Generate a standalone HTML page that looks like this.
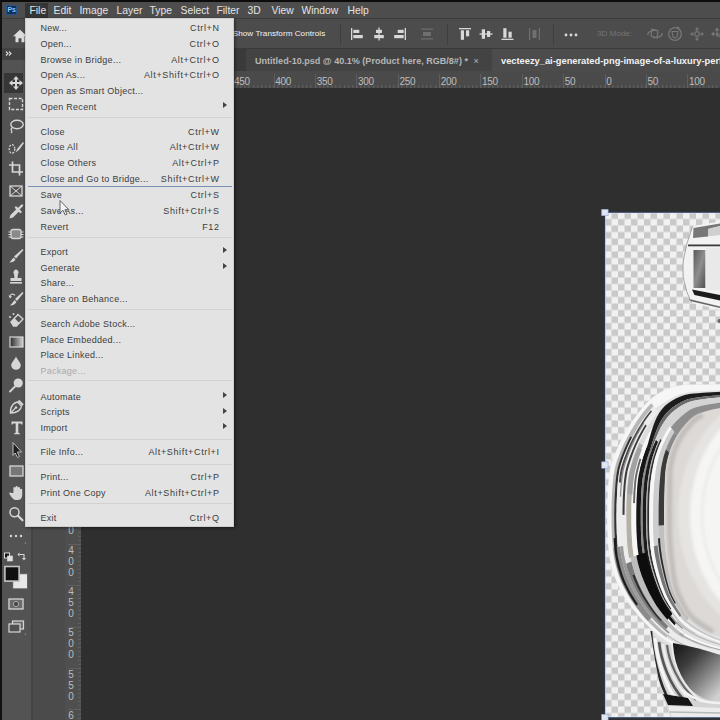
<!DOCTYPE html>
<html><head><meta charset="utf-8"><title>Photoshop</title>
<style>
*{box-sizing:border-box;margin:0;padding:0}
html,body{width:720px;height:720px;overflow:hidden;background:#2a2a2a;font-family:"Liberation Sans",sans-serif}
#app{position:relative;width:720px;height:720px;overflow:hidden;background:#2f2f2f}
.abs{position:absolute}
#topstrip{left:0;top:0;width:720px;height:2.5px;background:#0c0c0c}
#leftstrip{left:0;top:0;width:2px;height:720px;background:#111}
#menubar{left:2px;top:2px;width:718px;height:16px;background:#4d4d4d}
.mb{position:absolute;top:0;margin-left:-.5px;font-size:10.35px;line-height:14px;color:#e4e4e4;white-space:nowrap}
#filehl{left:25px;top:3px;width:23px;height:15px;background:#353535}
#pslogo{left:6px;top:5px;width:11px;height:10px;background:#12305a;border:1px solid #24558f;color:#8fc4f5;font-size:7px;line-height:8px;font-weight:bold;text-align:center;letter-spacing:-.3px}
#optbar{left:2px;top:18px;width:718px;height:30px;background:#4c4c4c;border-top:1px solid #3c3c3c}
#tabbar{left:2px;top:48px;width:718px;height:23px;background:#3a3a3a}
#intab{left:246px;top:49px;width:246px;height:22px;background:#434343}
#acttab{left:492px;top:49px;width:228px;height:22px;background:#4c4c4c}
.tab{position:absolute;top:54px;font-size:9.5px;line-height:14px;white-space:nowrap}
#hruler{left:65px;top:71px;width:655px;height:17px;background:#4a4a4a}
#hticks{left:81px;top:85px;width:639px;height:3px;background:repeating-linear-gradient(90deg,#626262 0,#626262 1px,transparent 1px,transparent 4.136px);background-position:2.3px 0}
#vticks{left:78px;top:88px;width:3px;height:632px;background:repeating-linear-gradient(180deg,#626262 0,#626262 1px,transparent 1px,transparent 4.136px);background-position:0 0.9px}
.hl{position:absolute;top:4.5px;margin-left:-.8px;font-size:10px;letter-spacing:-.3px;line-height:12px;color:#bdbdbd}
.ht{position:absolute;top:3px;width:1px;height:14px;background:#5e5e5e}
#vruler{left:65px;top:88px;width:16px;height:632px;background:#4f4f4f}
.vl{position:absolute;left:2px;font-size:10px;line-height:11px;color:#bdbdbd;text-align:center;width:8px}
.vt{position:absolute;left:3px;width:13px;height:1px;background:#5e5e5e}
#toolbar{left:2px;top:50px;width:29px;height:670px;background:#535353}
#tbsep{left:31px;top:50px;width:2px;height:670px;background:#444}
#panel{left:33px;top:71px;width:32px;height:649px;background:#4b4b4b}
#menu{left:25px;top:18px;width:209px;height:509px;background:#e3e3e3;box-shadow:inset 0 0 0 1px #cdcdcd,1px 1px 3px rgba(0,0,0,.5)}
.mi{position:absolute;left:0;width:209px;height:16px;font-size:9px;line-height:16px;color:#3c3c3c;white-space:nowrap}
.mi .l{position:absolute;left:15.4px;letter-spacing:.28px}
.mi .s{position:absolute;right:15px;letter-spacing:.65px;margin-right:-.65px}
.mi .ar{position:absolute;right:6.8px;top:3.5px;width:0;height:0;border-left:4px solid #444;border-top:3px solid transparent;border-bottom:3px solid transparent}
.mi.dis{color:#a9a9a9}
.sep{position:absolute;left:3px;width:204px;height:1px;background:#d2d2d2}
.bsep{position:absolute;left:3px;width:204px;height:1px;background:#7a90b9}
</style></head><body>
<div id="app">
<div class="abs" id="topstrip"></div>
<div class="abs" id="menubar"></div>
<div class="abs" id="filehl"></div>
<div class="abs" style="left:0;top:4px;width:720px;height:15px"><span class="mb" style="left:30px">File</span>
<span class="mb" style="left:54px">Edit</span>
<span class="mb" style="left:80px">Image</span>
<span class="mb" style="left:117px">Layer</span>
<span class="mb" style="left:150px">Type</span>
<span class="mb" style="left:181px">Select</span>
<span class="mb" style="left:217px">Filter</span>
<span class="mb" style="left:248px">3D</span>
<span class="mb" style="left:272px">View</span>
<span class="mb" style="left:302px">Window</span>
<span class="mb" style="left:348px">Help</span></div>
<div class="abs" id="pslogo">Ps</div>
<div class="abs" id="optbar"></div>
<div class="abs" id="tabbar"></div>
<div class="abs" id="intab"></div>
<div class="abs" id="acttab"></div>
<span class="tab" style="left:255px;color:#b6b6b6;font-weight:bold;font-size:9.05px">Untitled-10.psd @ 40.1% (Product here, RGB/8#) * <span style="font-weight:normal;margin-left:3px">×</span></span>
<span class="tab" style="left:501px;color:#f2f2f2;font-weight:bold;font-size:9.3px">vecteezy_ai-generated-png-image-of-a-luxury-perfume</span>
<div class="abs" id="hruler"><span class="hl" style="left:169.8px">450</span>
<i class="ht" style="left:167.3px"></i>
<span class="hl" style="left:211.1px">400</span>
<i class="ht" style="left:208.6px"></i>
<span class="hl" style="left:252.5px">350</span>
<i class="ht" style="left:250.0px"></i>
<span class="hl" style="left:293.8px">300</span>
<i class="ht" style="left:291.3px"></i>
<span class="hl" style="left:335.2px">250</span>
<i class="ht" style="left:332.7px"></i>
<span class="hl" style="left:376.6px">200</span>
<i class="ht" style="left:374.1px"></i>
<span class="hl" style="left:417.9px">150</span>
<i class="ht" style="left:415.4px"></i>
<span class="hl" style="left:459.3px">100</span>
<i class="ht" style="left:456.8px"></i>
<span class="hl" style="left:500.6px">50</span>
<i class="ht" style="left:498.1px"></i>
<span class="hl" style="left:542.0px">0</span>
<i class="ht" style="left:539.5px"></i>
<span class="hl" style="left:583.4px">50</span>
<i class="ht" style="left:580.9px"></i>
<span class="hl" style="left:624.7px">100</span>
<i class="ht" style="left:622.2px"></i></div>
<div class="abs" id="vruler"><span class="vl" style="top:415.3px">3<br>5<br>0</span>
<i class="vt" style="top:414.5px"></i>
<span class="vl" style="top:456.7px">4<br>0<br>0</span>
<i class="vt" style="top:455.9px"></i>
<span class="vl" style="top:498.0px">4<br>5<br>0</span>
<i class="vt" style="top:497.2px"></i>
<span class="vl" style="top:539.4px">5<br>0<br>0</span>
<i class="vt" style="top:538.6px"></i>
<span class="vl" style="top:580.8px">5<br>5<br>0</span>
<i class="vt" style="top:580.0px"></i>
<span class="vl" style="top:622.1px">6<br>0<br>0</span>
<i class="vt" style="top:621.3px"></i></div>
<div class="abs" id="hticks"></div><div class="abs" id="vticks"></div>
<div class="abs" id="toolbar"></div>
<div class="abs" id="tbsep"></div>
<div class="abs" style="left:2px;top:48px;width:29px;height:12px;background:#414141"></div>
<div class="abs" id="panel"></div>
<svg class="abs" style="left:0;top:0" width="720" height="72" viewBox="0 0 720 72"><g transform="translate(20 36.3)" ><path d="M0-6.5 L7 0 H4.5 V6 H1.5 V2 H-1.5 V6 H-4.5 V0 H-7 Z" fill="#dcdcdc"/></g>
<path d="M6 51.5 L8 53.5 L6 55.5 M9 51.5 L11 53.5 L9 55.5" fill="none" stroke="#ddd" stroke-width="1.1"/>
<rect x="340" y="24" width="1" height="21" fill="#3e3e3e"/>
<rect x="447" y="24" width="1" height="21" fill="#3e3e3e"/>
<rect x="553" y="24" width="1" height="21" fill="#3e3e3e"/>
<g transform="translate(357 34)" ><rect x="-6" y="-6" width="1.3" height="12" fill="#d8d8d8"/><rect x="-3.7" y="-4.2" width="6" height="3.2" fill="#d8d8d8"/><rect x="-3.7" y="1" width="9.5" height="3.2" fill="#d8d8d8"/></g>
<g transform="translate(379 34)" ><rect x="-0.6" y="-6.5" width="1.3" height="13" fill="#d8d8d8"/><rect x="-3" y="-4.2" width="6" height="3.2" fill="#d8d8d8"/><rect x="-4.7" y="1" width="9.5" height="3.2" fill="#d8d8d8"/></g>
<g transform="translate(400 34)" ><rect x="4.7" y="-6" width="1.3" height="12" fill="#d8d8d8"/><rect x="-2.3" y="-4.2" width="6" height="3.2" fill="#d8d8d8"/><rect x="-5.8" y="1" width="9.5" height="3.2" fill="#d8d8d8"/></g>
<g transform="translate(427 34)" ><rect x="-6" y="-5.5" width="12" height="1.2" fill="#6f6f6f"/><rect x="-6" y="4.3" width="12" height="1.2" fill="#6f6f6f"/><rect x="-4" y="-2" width="8" height="4" fill="#6f6f6f"/></g>
<g transform="translate(465 34)" ><rect x="-6" y="-6" width="12" height="1.3" fill="#d8d8d8"/><rect x="-4.2" y="-3.7" width="3.2" height="9.5" fill="#d8d8d8"/><rect x="1" y="-3.7" width="3.2" height="6" fill="#d8d8d8"/></g>
<g transform="translate(486 34)" ><rect x="-6.5" y="-0.6" width="13" height="1.3" fill="#d8d8d8"/><rect x="-4.2" y="-4.7" width="3.2" height="9.5" fill="#d8d8d8"/><rect x="1" y="-3" width="3.2" height="6" fill="#d8d8d8"/></g>
<g transform="translate(507.5 34)" ><rect x="-6" y="4.7" width="12" height="1.3" fill="#d8d8d8"/><rect x="-4.2" y="-5.8" width="3.2" height="9.5" fill="#d8d8d8"/><rect x="1" y="-2.3" width="3.2" height="6" fill="#d8d8d8"/></g>
<g transform="translate(534.5 34)" ><rect x="-5.5" y="-6" width="1.2" height="12" fill="#6f6f6f"/><rect x="4.3" y="-6" width="1.2" height="12" fill="#6f6f6f"/><rect x="-2" y="-4" width="4" height="8" fill="#6f6f6f"/></g>
<g transform="translate(571 35)" ><circle cx="-5" cy="0" r="1.4" fill="#d8d8d8"/><circle cx="0" cy="0" r="1.4" fill="#d8d8d8"/><circle cx="5" cy="0" r="1.4" fill="#d8d8d8"/></g>
<g transform="translate(655 34)" ><path d="M-7 1 A7 4 0 0 1 2-3.5 M7-1 A7 4 0 0 1 -2 3.5" fill="none" stroke="#777" stroke-width="1.3"/><path d="M-3-5 L3-3 L2 4 L-4 2 Z" fill="none" stroke="#777" stroke-width="1.2"/></g>
<g transform="translate(675 34)" ><circle r="6.3" fill="none" stroke="#777" stroke-width="1.3"/><path d="M-3-2.5 H3 L2 3 L0 4 L-2 3 Z" fill="none" stroke="#777" stroke-width="1.1"/><path d="M2-8 L5-6 L2.5-4.5Z" fill="#777"/></g>
<g transform="translate(697 34)" ><path d="M0-7 L2.2-4.5 H-2.2 Z M0 7 L2.2 4.5 H-2.2 Z M-7 0 L-4.5-2.2 V2.2 Z M7 0 L4.5-2.2 V2.2 Z" fill="#777"/><path d="M0-5 V5 M-5 0 H5" stroke="#777" stroke-width="1.2"/><rect x="-2" y="-2" width="4" height="4" fill="#4c4c4c" stroke="#777" stroke-width="1"/></g>
<g transform="translate(717 34)" ><path d="M-6 0 L-3-2.5 V2.5 Z M0-6.5 L2.5-3.5 H-2.5 Z" fill="#777"/><path d="M-4 0 H3 M0-4 V3 M0 0 L4 4" stroke="#777" stroke-width="1.2"/></g></svg><span class="abs" style="left:232.8px;top:27px;font-size:8.1px;line-height:14px;color:#f4f4f4;white-space:nowrap;letter-spacing:.05px">Show Transform Controls</span><span class="abs" style="left:597px;top:27px;font-size:8.1px;line-height:14px;color:#757575;white-space:nowrap">3D Mode:</span>
<svg class="abs" style="left:0;top:0" width="34" height="720" viewBox="0 0 34 720"><rect x="4" y="73" width="19" height="20" fill="#363636"/>
<g transform="translate(16 83)" ><path d="M0-7 L3-3.5 H1 V-1 H3.5 V-3 L7 0 L3.5 3 V1 H1 V3.5 H3 L0 7 L-3 3.5 H-1 V1 H-3.5 V3 L-7 0 L-3.5-3 V-1 H-1 V-3.5 H-3 Z" fill="#d6d6d6"/></g>
<g transform="translate(16 104)" ><rect x="-6.5" y="-5.5" width="13" height="11" fill="none" stroke="#d6d6d6" stroke-width="1.4" stroke-dasharray="3 1.6"/></g>
<g transform="translate(16 126)" ><ellipse cx="1" cy="-1.5" rx="6.2" ry="4.2" fill="none" stroke="#d6d6d6" stroke-width="1.4"/><path d="M-3.5 1.5 q-2 1.5 -1 3 q1 1.5 -0.5 2.5" fill="none" stroke="#d6d6d6" stroke-width="1.3"/></g>
<g transform="translate(16 148)" ><ellipse cx="-4" cy="1" rx="2.8" ry="4.3" fill="none" stroke="#d6d6d6" stroke-width="1.2" stroke-dasharray="2 1.3"/><path d="M7-6 L1.5 0.5 L-0.5 4.5 L3 2 L8-5 Z" fill="#d6d6d6"/></g>
<g transform="translate(16 168.5)" ><path d="M-3.5-7 V3.5 H7 M-7-3.5 H3.5 V7" fill="none" stroke="#d6d6d6" stroke-width="1.7"/></g>
<g transform="translate(16 191)" ><rect x="-6" y="-5" width="12" height="10" fill="none" stroke="#d6d6d6" stroke-width="1.3"/><path d="M-6-5 L6 5 M6-5 L-6 5" stroke="#d6d6d6" stroke-width="1"/></g>
<g transform="translate(16 212)" ><path d="M-6.5 6.5 L-5.5 3 L1-3.5 L3.5-1 L-3 5.5 Z" fill="#d6d6d6"/><path d="M0-4.5 L4.5 0 M2.5-3 L6-6.5" stroke="#d6d6d6" stroke-width="2.4" stroke-linecap="round"/></g>
<g transform="translate(16 234)" ><rect x="-5" y="-4.5" width="10" height="9" rx="2" fill="#8a8a8a" stroke="#d6d6d6" stroke-width="1.3"/><path d="M-7.5-2 H-5 M-7.5 0.5 H-5 M-7.5 3 H-5 M5-2 H7.5 M5 0.5 H7.5 M5 3 H7.5" stroke="#d6d6d6" stroke-width="1"/></g>
<g transform="translate(16 256)" ><path d="M6.5-7 L7.5-6 L0 2.5 L-2 0.5 Z" fill="#d6d6d6"/><path d="M-2.5 1.5 L-0.5 3.5 Q-2 6.5 -6.5 6.5 Q-4.5 4 -2.5 1.5 Z" fill="#d6d6d6"/></g>
<g transform="translate(16 277)" ><path d="M-2-3 A2.6 2.6 0 1 1 2-3 L1.5 1 H5.5 V4 H-5.5 V1 H-1.5 Z" fill="#d6d6d6"/><rect x="-6" y="5" width="12" height="1.6" fill="#d6d6d6"/></g>
<g transform="translate(16 299)" ><path d="M6.5-7 L7.5-6 L1 2 L-1 0 Z" fill="#d6d6d6"/><path d="M-1.5 1 L0.5 3 Q-1.5 6.5 -6 6.5 Q-3.5 4 -1.5 1 Z" fill="#d6d6d6"/><path d="M-6.5-2 A3 3 0 0 1 -1-3.5" fill="none" stroke="#d6d6d6" stroke-width="1.2"/><path d="M-7.5-3.5 L-6-0.5 L-4-2.5 Z" fill="#d6d6d6"/></g>
<g transform="translate(16 320)" ><path d="M-5 2 L2-5.5 L7-1 L0.5 6 H-2.5 Z" fill="none" stroke="#d6d6d6" stroke-width="1.3"/><path d="M-1.5-1.8 L3.5 3 L0.5 6 H-2.5 L-5 2 Z" fill="#d6d6d6"/><circle cx="-6" cy="-3" r="1" fill="#d6d6d6"/><circle cx="-2.5" cy="-6" r="1" fill="#d6d6d6"/></g>
<defs><linearGradient id="gr1" x1="0" x2="1" y1="0" y2="0"><stop offset="0" stop-color="#2a2a2a"/><stop offset="1" stop-color="#d0d0d0"/></linearGradient></defs>
<g transform="translate(16 342)" ><rect x="-6" y="-5" width="13" height="10" fill="url(#gr1)" stroke="#d6d6d6" stroke-width="1.2"/></g>
<g transform="translate(16 363)" ><path d="M0-6.5 C1.5-3 4.8-0.5 4.8 2.3 A4.8 4.4 0 0 1 -4.8 2.3 C-4.8-0.5 -1.5-3 0-6.5 Z" fill="#d6d6d6"/></g>
<g transform="translate(16 385)" ><circle cx="2.2" cy="-2" r="4.6" fill="#d6d6d6"/><path d="M-1 1.5 L-6 6.5" stroke="#d6d6d6" stroke-width="1.8" stroke-linecap="round"/></g>
<g transform="translate(16 407)" ><path d="M-5.5 6 C-6-1 -2-4.5 1.5-5 L5.5-1 C5 2.5 1.5 6 -5.5 6 Z" fill="none" stroke="#d6d6d6" stroke-width="1.4"/><path d="M-5.5 6 L-0.5 1" stroke="#d6d6d6" stroke-width="1.1"/><circle cx="0" cy="0.5" r="1.2" fill="#d6d6d6"/><path d="M2.5-6.5 L7-2" stroke="#d6d6d6" stroke-width="2"/></g>
<g transform="translate(17 428)" ><path d="M-5.5-6.5 H5.5 V-3.5 H4.3 L4-4.6 H1.3 V4.8 L2.8 5.2 V6.3 H-2.8 V5.2 L-1.3 4.8 V-4.6 H-4 L-4.3-3.5 H-5.5 Z" fill="#d6d6d6"/></g>
<g transform="translate(16 450)" ><path d="M-3-7.5 L5.5 2 L1.3 2 L3.5 6.5 L1.5 7.5 L-0.8 3 L-3 5.5 Z" fill="#1f1f1f" stroke="#bdbdbd" stroke-width="1"/></g>
<g transform="translate(16 471)" ><rect x="-6" y="-5" width="13" height="10" fill="#777" stroke="#d6d6d6" stroke-width="1.3"/></g>
<g transform="translate(16 493)" ><path d="M-2.6 0 V-5 a1.1 1.1 0 0 1 2.2 0 V-6 a1.1 1.1 0 0 1 2.2 0 V-5 a1.1 1.1 0 0 1 2.2 0 V-3.2 a1.1 1.1 0 0 1 2.2 0 V2 C6.2 5 4.5 7 1.5 7 H0 C-2.5 7 -4 5 -6.5 1 C-7.2-0.3 -5.6-1 -4.6 0 Z" fill="#d6d6d6"/></g>
<g transform="translate(16 514)" ><circle cx="-1.5" cy="-1.8" r="4.5" fill="none" stroke="#d6d6d6" stroke-width="1.5"/><path d="M2 1.8 L6.5 6.3" stroke="#d6d6d6" stroke-width="2.2" stroke-linecap="round"/></g>
<g transform="translate(16 536)" ><circle cx="-5" cy="0" r="1.2" fill="#d6d6d6"/><circle cx="0" cy="0" r="1.2" fill="#d6d6d6"/><circle cx="5" cy="0" r="1.2" fill="#d6d6d6"/><path d="M8.5 7.5 L10 6 V7.5 Z" fill="#aaa"/></g>
<rect x="4.5" y="553" width="5" height="5" fill="#111" stroke="#ddd" stroke-width="1"/><rect x="7.5" y="556" width="5" height="5" fill="#e0e0e0" stroke="#ddd" stroke-width="0.6"/>
<path d="M19.5 554.5 H24 V559" fill="none" stroke="#d6d6d6" stroke-width="1.1"/><path d="M19.5 552.5 L17.5 554.5 L19.5 556.5 Z M22 558 L24 560.5 L26 558 Z" fill="#d6d6d6"/>
<rect x="12.8" y="573.8" width="14.6" height="15" fill="#e8e8e8" stroke="#5a5a5a" stroke-width="0.8"/>
<rect x="4.9" y="566.5" width="14.2" height="14.6" fill="#101010" stroke="#c4c4c4" stroke-width="1.6"/>
<g transform="translate(16 604)" ><rect x="-7" y="-5" width="14" height="10" fill="#6a6a6a" stroke="#d6d6d6" stroke-width="1.3"/><circle cx="0" cy="0" r="2.7" fill="#4a4a4a" stroke="#d6d6d6" stroke-width="0.6"/></g>
<g transform="translate(16 627)" ><rect x="-3.5" y="-6" width="11" height="8" fill="#6a6a6a" stroke="#d6d6d6" stroke-width="1.2"/><rect x="-7" y="-3" width="11" height="8" fill="#505050" stroke="#d6d6d6" stroke-width="1.2"/><path d="M8.5 7.5 L10 6 V7.5 Z" fill="#aaa"/></g></svg>
<svg class="abs" style="left:596px;top:206px" width="124" height="514" viewBox="596 206 124 514"><defs>
<pattern id="chk" x="605" y="212.5" width="13" height="13" patternUnits="userSpaceOnUse">
<rect width="13" height="13" fill="#f1f1f1"/><rect x="6.5" width="6.5" height="6.5" fill="#c9c9c9"/><rect y="6.5" width="6.5" height="6.5" fill="#c9c9c9"/>
</pattern>
<filter id="bl1" x="-20%" y="-20%" width="140%" height="140%"><feGaussianBlur stdDeviation="0.7"/></filter>
<filter id="bl3" x="-10%" y="-10%" width="120%" height="120%"><feGaussianBlur stdDeviation="0.65"/></filter>
<filter id="bl2" x="-20%" y="-20%" width="140%" height="140%"><feGaussianBlur stdDeviation="1.6"/></filter>
<filter id="bl4" x="-30%" y="-30%" width="160%" height="160%"><feGaussianBlur stdDeviation="4"/></filter>
<linearGradient id="capin" x1="0" y1="0" x2="1" y2="1"><stop offset="0" stop-color="#5a5a5a"/><stop offset=".5" stop-color="#8e8e8e"/><stop offset="1" stop-color="#4e4e4e"/></linearGradient>
<linearGradient id="bowl" x1="0" y1="0" x2="0.8" y2="1"><stop offset="0" stop-color="#151515"/><stop offset=".35" stop-color="#3c3c3c"/><stop offset=".7" stop-color="#8a8a8a"/><stop offset="1" stop-color="#d0d0d0"/></linearGradient>
<radialGradient id="lab" cx="760" cy="520" r="110" gradientUnits="userSpaceOnUse"><stop offset="0" stop-color="#f4f4f2"/><stop offset=".7" stop-color="#ececea"/><stop offset="1" stop-color="#dcdad8"/></radialGradient>
<clipPath id="imgclip"><rect x="605" y="212.5" width="115" height="505"/></clipPath>
<clipPath id="bodyclip"><path d="M720 384.3 L690 384.5 C672 384.5 655 392 642 408 C628 425 616 448 611 465 C606 485 606 540 610 560 C614 580 622 595 632 608 C640 618 646 624 650 628 L655 660 L661 692 L671 718 L720 718 Z"/></clipPath>
</defs>
<rect x="605" y="212.5" width="115" height="505" fill="url(#chk)"/>
<g clip-path="url(#imgclip)">
<g filter="url(#bl1)">
<path d="M720 221.5 L693 226 L687 245 L683.5 262 V276 L687 291 L692 303 L720 310 Z" fill="#f2f2f2"/>
<path d="M693.5 228 L720 223.5 V226 L708 229 V236.5 L693 238 Z" fill="#777"/>
<path d="M708 229 L720 226 V235 L708 236.5 Z" fill="#cfcfcf"/>
<path d="M688 244.5 H720 V246.3 H688 Z" fill="#3a3a3a"/>
<rect x="693.5" y="250" width="12" height="38" fill="url(#capin)"/>
<rect x="705.5" y="248" width="15" height="42" fill="#e9e9e9"/>
<path d="M692 289.5 L720 295 V300.5 L694.5 295 Z" fill="#1e1e1e"/>
<path d="M689 299 L720 306.5 V308 L690 301 Z" fill="#666"/>
<path d="M692.5 226.5 L686.5 245 L683 262 V276 L686.5 291 L691.5 303" fill="none" stroke="#9a9a9a" stroke-width="0.8"/>
</g>
<circle cx="719.5" cy="321" r="2" fill="#666" filter="url(#bl1)"/>
<g clip-path="url(#bodyclip)">
<rect x="600" y="375" width="125" height="345" fill="#e2e2e2"/>
<g filter="url(#bl3)">
<path d="M730.0 384.3 L725.0 384.3 L720.0 384.3 L715.0 384.3 L710.0 384.4 L705.0 384.4 L700.0 384.4 L695.0 384.5 L690.0 384.5 L685.0 384.7 L680.0 385.3 L675.1 386.3 L670.4 387.7 L665.7 389.5 L661.2 391.7 L656.9 394.3 L652.9 397.3 L649.1 400.5 L645.5 404.0 L642.2 407.7 L639.1 411.7 L636.1 415.7 L633.2 419.8 L630.5 423.9 L627.9 428.2 L625.3 432.5 L622.9 436.9 L620.6 441.3 L618.4 445.8 L616.4 450.4 L614.5 455.0 L612.7 459.7 L611.2 464.4 L610.1 469.3 L609.3 474.3 L608.7 479.2 L608.3 484.2 L607.9 489.2 L607.6 494.2 L607.4 499.2 L607.3 504.2 L607.2 509.2 L607.1 514.2 L607.1 519.2 L607.2 524.2 L607.3 529.2 L607.5 534.2 L607.7 539.2 L608.1 544.2 L608.5 549.1 L609.1 554.1 L609.8 559.0 L610.9 563.9 L612.1 568.8 L613.5 573.6 L615.2 578.3 L617.1 582.9 L619.2 587.5 L621.4 591.9 L623.9 596.2 L626.6 600.5 L629.5 604.6 L632.5 608.6 L635.6 612.5 L638.8 616.3 L642.2 620.0 L645.6 623.6 L649.2 627.1 L652.9 630.5 L656.7 633.7 L660.7 636.8 L664.7 639.7 L668.9 642.5 L673.3 644.9 L677.8 647.0 L682.4 649.0 L687.0 650.7 L691.8 652.3 L696.6 653.7 L701.5 654.8 L706.4 655.9 L711.3 656.8 L716.2 657.5 L721.2 658.1 L726.2 658.7 L730.0 659.0 L730.2 657.6 L726.3 657.2 L721.4 656.6 L716.6 655.9 L711.7 655.1 L706.8 654.1 L702.0 653.0 L697.3 651.8 L692.6 650.4 L687.9 648.8 L683.3 647.0 L678.9 645.0 L674.5 642.8 L670.2 640.3 L666.2 637.5 L662.3 634.5 L658.5 631.4 L654.8 628.1 L651.3 624.8 L647.9 621.3 L644.6 617.7 L641.4 613.9 L638.4 610.1 L635.4 606.3 L632.6 602.3 L629.9 598.2 L627.4 594.1 L625.1 589.8 L622.9 585.5 L620.9 581.0 L619.2 576.5 L617.6 571.9 L616.3 567.2 L615.1 562.5 L614.1 557.8 L613.4 553.0 L612.9 548.2 L612.5 543.4 L612.2 538.5 L611.9 533.7 L611.8 528.9 L611.6 524.0 L611.6 519.2 L611.6 514.4 L611.6 509.5 L611.7 504.7 L611.8 499.8 L612.0 495.0 L612.3 490.2 L612.7 485.3 L613.1 480.5 L613.6 475.7 L614.4 470.9 L615.4 466.2 L616.8 461.5 L618.4 457.0 L620.2 452.4 L622.1 448.0 L624.1 443.6 L626.3 439.2 L628.6 434.9 L631.3 430.9 L634.2 427.1 L637.5 423.5 L640.8 420.2 L644.3 417.0 L647.9 414.0 L651.6 411.1 L655.4 408.3 L659.2 405.7 L663.1 403.2 L667.1 400.7 L671.1 398.4 L675.2 396.3 L679.5 394.6 L683.9 393.2 L688.4 392.3 L693.0 391.8 L697.6 391.5 L702.3 391.2 L706.9 390.9 L711.6 390.7 L716.4 390.5 L721.1 390.3 L725.9 390.2 L730.6 390.1 Z" fill="#f6f6f6"/>
<path d="M651.3 403.2 L647.8 406.7 L644.7 410.4 L641.7 414.3 L638.8 418.3 L636.1 422.3 L633.5 426.4 L631.0 430.6 L628.6 434.9 L626.3 439.2 L624.1 443.6 L622.1 448.0 L620.2 452.4 L618.4 457.0 L616.8 461.5 L615.4 466.2 L614.4 470.9 L613.6 475.7 L613.1 480.5 L612.7 485.3 L612.3 490.2 L612.0 495.0 L611.8 499.8 L611.7 504.7 L611.6 509.5 L611.6 514.4 L611.6 519.2 L611.6 524.0 L611.8 528.9 L611.9 533.7 L612.2 538.5 L612.5 543.4 L612.9 548.2 L613.4 553.0 L614.1 557.8 L615.1 562.5 L616.3 567.2 L617.6 571.9 L619.2 576.5 L620.9 581.0 L622.9 585.5 L625.1 589.8 L627.4 594.1 L629.9 598.2 L632.6 602.3 L635.4 606.3 L638.4 610.1 L641.4 613.9 L644.6 617.7 L647.9 621.3 L651.3 624.8 L654.8 628.1 L658.5 631.4 L662.3 634.5 L666.2 637.5 L667.8 635.0 L664.1 632.0 L660.5 628.8 L657.0 625.5 L653.6 622.2 L650.4 618.7 L647.3 615.0 L644.3 611.3 L641.4 607.5 L638.7 603.7 L636.0 599.8 L633.6 595.7 L631.2 591.6 L629.1 587.5 L627.1 583.2 L625.2 578.9 L623.6 574.5 L622.1 570.1 L620.9 565.6 L619.8 561.0 L618.9 556.4 L618.2 551.8 L617.7 547.2 L617.4 542.5 L617.1 537.9 L616.8 533.2 L616.7 528.5 L616.6 523.9 L616.5 519.2 L616.5 514.6 L616.6 509.9 L616.6 505.3 L616.8 500.6 L617.0 495.9 L617.2 491.3 L617.5 486.6 L617.9 482.0 L618.4 477.3 L619.1 472.7 L620.0 468.1 L621.3 463.6 L622.8 459.2 L624.4 454.7 L626.2 450.4 L628.1 446.0 L630.1 441.7 L632.2 437.5 L634.4 433.3 L636.8 429.2 L639.2 425.1 L641.8 421.1 L644.5 417.2 L647.4 413.4 L650.4 409.7 L653.7 406.3 Z" fill="#b8b8b8"/>
<path d="M630.5 436.3 L628.3 440.6 L626.3 444.9 L624.3 449.3 L622.5 453.7 L620.8 458.1 L619.2 462.7 L617.9 467.2 L616.9 471.9 L616.2 476.6 L615.7 481.3 L615.3 486.0 L615.0 490.8 L614.7 495.5 L614.5 500.2 L614.4 505.0 L614.3 509.7 L614.2 514.5 L614.3 519.2 L614.3 524.0 L614.4 528.7 L614.6 533.4 L614.8 538.2 L615.1 542.9 L615.5 547.6 L616.0 552.4 L616.7 557.1 L617.6 561.7 L618.8 566.3 L620.1 570.9 L622.1 570.1 L620.8 565.6 L619.7 561.0 L618.8 556.4 L618.1 551.8 L617.6 547.2 L617.3 542.5 L617.0 537.9 L616.7 533.2 L616.6 528.6 L616.5 523.9 L616.4 519.2 L616.4 514.6 L616.5 509.9 L616.5 505.2 L616.7 500.6 L616.9 495.9 L617.1 491.3 L617.4 486.6 L617.8 481.9 L618.3 477.3 L619.0 472.7 L619.9 468.1 L621.2 463.6 L622.7 459.1 L624.3 454.7 L626.1 450.3 L628.0 446.0 L630.0 441.7 L632.1 437.5 Z" fill="#333"/>
<path d="M653.7 406.3 L650.4 409.7 L647.4 413.4 L644.5 417.2 L641.8 421.1 L639.2 425.1 L636.8 429.2 L634.4 433.3 L632.2 437.5 L630.1 441.7 L628.1 446.0 L626.2 450.4 L624.4 454.7 L622.8 459.2 L621.3 463.6 L620.0 468.1 L619.1 472.7 L618.4 477.3 L617.9 482.0 L617.5 486.6 L617.2 491.3 L617.0 495.9 L616.8 500.6 L616.6 505.3 L616.6 509.9 L616.5 514.6 L616.5 519.2 L616.6 523.9 L616.7 528.5 L616.8 533.2 L617.1 537.9 L617.4 542.5 L617.7 547.2 L618.2 551.8 L618.9 556.4 L619.8 561.0 L620.9 565.6 L622.1 570.1 L623.6 574.5 L625.2 578.9 L627.1 583.2 L629.1 587.5 L631.2 591.6 L633.6 595.7 L636.0 599.8 L638.7 603.7 L641.4 607.5 L644.3 611.3 L647.3 615.0 L650.4 618.7 L653.6 622.2 L657.0 625.5 L660.5 628.8 L664.1 632.0 L667.8 635.0 L671.7 637.9 L675.8 640.4 L680.1 642.7 L684.4 644.7 L688.9 646.6 L693.4 648.2 L698.0 649.7 L702.7 651.0 L707.4 652.2 L712.1 653.2 L716.9 654.2 L721.7 654.9 L726.6 655.6 L730.3 656.0 L730.7 652.9 L727.0 652.4 L722.3 651.6 L717.7 650.6 L713.1 649.5 L708.5 648.4 L704.0 647.0 L699.5 645.6 L695.1 644.0 L690.8 642.2 L686.6 640.2 L682.5 638.1 L678.5 635.7 L674.7 633.1 L671.1 630.1 L667.8 626.9 L664.5 623.7 L661.3 620.4 L658.3 617.0 L655.4 613.5 L652.6 609.8 L650.0 606.1 L647.6 602.3 L645.2 598.5 L643.0 594.7 L640.9 590.8 L638.9 586.8 L637.1 582.8 L635.4 578.8 L633.8 574.7 L632.4 570.5 L631.2 566.4 L630.1 562.2 L629.2 557.9 L628.4 553.7 L627.9 549.4 L627.4 545.1 L627.1 540.8 L626.9 536.5 L626.7 532.2 L626.6 527.9 L626.5 523.6 L626.4 519.3 L626.4 515.0 L626.4 510.7 L626.5 506.4 L626.6 502.1 L626.8 497.8 L627.0 493.5 L627.2 489.2 L627.6 484.9 L628.0 480.6 L628.6 476.3 L629.3 472.0 L630.4 467.7 L631.6 463.5 L632.9 459.3 L634.3 455.1 L635.9 451.0 L637.6 446.9 L639.4 442.8 L641.3 438.7 L643.4 434.7 L645.5 430.8 L647.8 426.9 L650.3 423.1 L652.9 419.4 L655.6 415.8 L658.6 412.3 Z" fill="#ececec"/>
<path d="M643.6 422.9 L641.1 426.8 L638.7 430.9 L636.5 434.9 L634.3 439.1 L632.3 443.3 L630.4 447.5 L628.6 451.8 L627.0 456.1 L625.4 460.5 L624.0 464.8 L622.8 469.3 L621.9 473.8 L621.3 478.3 L620.8 482.8 L620.4 487.4 L620.1 491.9 L619.9 496.5 L621.1 496.7 L621.3 492.2 L621.6 487.7 L622.0 483.2 L622.4 478.7 L623.1 474.2 L623.9 469.7 L625.1 465.3 L626.5 461.0 L628.0 456.7 L629.6 452.4 L631.3 448.1 L633.2 443.9 L635.2 439.7 L637.3 435.6 L639.5 431.5 L641.9 427.5 L644.3 423.6 Z" fill="#8a8a8a"/>
<path d="M639.4 442.8 L637.6 446.9 L635.9 451.0 L634.3 455.1 L632.9 459.3 L631.6 463.5 L630.4 467.7 L629.3 472.0 L628.6 476.3 L628.0 480.6 L627.6 484.9 L627.2 489.2 L627.0 493.5 L626.8 497.8 L626.6 502.1 L626.5 506.4 L626.4 510.7 L626.4 515.0 L626.4 519.3 L626.5 523.6 L626.6 527.9 L626.7 532.2 L626.9 536.5 L627.1 540.8 L627.4 545.1 L627.9 549.4 L628.4 553.7 L629.2 557.9 L633.9 556.4 L633.2 552.3 L632.7 548.2 L632.3 544.1 L632.0 539.9 L631.8 535.8 L631.6 531.7 L631.5 527.6 L631.4 523.4 L631.4 519.3 L631.4 515.2 L631.4 511.1 L631.4 507.0 L631.5 502.8 L631.7 498.7 L631.9 494.6 L632.1 490.4 L632.4 486.3 L632.8 482.2 L633.3 478.0 L633.9 473.9 L634.9 469.8 L635.9 465.7 L637.1 461.6 L638.4 457.5 L639.8 453.5 L641.3 449.4 L643.0 445.4 Z" fill="#b5b0a8"/>
<path d="M658.6 412.3 L655.6 415.8 L652.9 419.4 L650.3 423.1 L647.8 426.9 L645.5 430.8 L643.4 434.7 L641.3 438.7 L639.4 442.8 L643.0 445.4 L644.7 441.4 L646.6 437.5 L648.7 433.6 L650.8 429.8 L653.1 426.0 L655.6 422.3 L658.2 418.8 L661.0 415.4 Z" fill="#dcdcdc"/>
<path d="M661.0 415.4 L658.2 418.8 L655.6 422.3 L653.1 426.0 L650.8 429.8 L648.7 433.6 L646.6 437.5 L644.7 441.4 L643.0 445.4 L641.3 449.4 L639.8 453.5 L638.4 457.5 L637.1 461.6 L635.9 465.7 L634.9 469.8 L633.9 473.9 L633.3 478.0 L632.8 482.2 L632.4 486.3 L632.1 490.4 L631.9 494.6 L631.7 498.7 L631.5 502.8 L631.4 507.0 L631.4 511.1 L631.4 515.2 L631.4 519.3 L631.4 523.4 L631.5 527.6 L631.6 531.7 L631.8 535.8 L632.0 539.9 L632.3 544.1 L632.7 548.2 L633.2 552.3 L633.9 556.4 L634.8 560.5 L635.7 564.5 L636.9 568.6 L638.1 572.6 L639.5 576.5 L641.1 580.5 L642.7 584.4 L644.5 588.3 L646.4 592.1 L648.5 596.0 L650.6 599.8 L652.9 603.5 L655.3 607.2 L657.9 610.8 L660.6 614.4 L663.5 617.8 L666.5 621.1 L669.6 624.4 L672.8 627.6 L676.2 630.7 L679.9 633.4 L683.7 635.8 L687.7 638.0 L691.8 640.0 L696.0 641.8 L700.3 643.5 L704.6 645.0 L709.0 646.4 L713.5 647.7 L718.0 648.9 L722.6 649.9 L727.2 650.7 L730.8 651.4 L731.0 649.8 L727.4 649.1 L722.9 648.2 L718.4 647.1 L714.0 645.8 L709.6 644.5 L705.3 643.0 L701.0 641.5 L696.9 639.7 L692.8 637.8 L688.8 635.7 L684.9 633.5 L681.2 631.0 L677.7 628.3 L674.5 625.2 L671.4 621.9 L668.5 618.6 L665.6 615.2 L662.9 611.8 L660.4 608.2 L658.0 604.6 L655.8 600.9 L653.7 597.2 L651.7 593.4 L649.9 589.6 L648.2 585.8 L646.6 582.0 L645.1 578.2 L643.7 574.3 L642.4 570.4 L641.3 566.6 L640.3 562.7 L639.4 558.8 L638.6 554.8 L638.0 550.9 L637.5 547.0 L637.2 543.0 L636.9 539.1 L636.7 535.1 L636.5 531.2 L636.4 527.2 L636.3 523.3 L636.3 519.3 L636.3 515.4 L636.3 511.5 L636.4 507.5 L636.5 503.6 L636.6 499.6 L636.8 495.7 L637.0 491.7 L637.2 487.8 L637.6 483.8 L638.0 479.8 L638.6 475.8 L639.4 471.9 L640.3 467.9 L641.4 463.9 L642.5 459.9 L643.7 455.9 L645.1 452.0 L646.6 448.0 L648.2 444.1 L649.9 440.3 L651.8 436.4 L653.9 432.7 L656.0 429.0 L658.3 425.3 L660.8 421.8 L663.5 418.4 Z" fill="#f8f8f8"/>
<path d="M650.9 410.3 L647.9 414.0 L645.1 417.8 L642.4 421.7 L639.9 425.7 L637.4 429.7 L635.1 433.9 L632.9 438.0 L630.8 442.3 L628.8 446.5 L627.0 450.8 L625.3 455.2 L623.7 459.6 L622.2 464.0 L620.9 468.5 L620.0 473.1 L619.4 477.6 L618.9 482.3 L620.8 482.8 L621.3 478.3 L621.9 473.8 L622.8 469.3 L624.0 464.8 L625.4 460.5 L627.0 456.1 L628.6 451.8 L630.4 447.5 L632.3 443.3 L634.3 439.1 L636.5 434.9 L638.7 430.9 L641.1 426.8 L643.6 422.9 L646.3 419.0 L649.0 415.2 L652.0 411.5 Z" fill="#4a4a4a"/>
<path d="M645.4 424.6 L643.0 428.5 L640.7 432.5 L638.5 436.6 L636.5 440.7 L634.6 444.8 L632.8 449.0 L631.1 453.2 L629.5 457.5 L628.1 461.8 L626.7 466.1 L625.6 470.4 L624.8 474.8 L624.2 479.3 L623.7 483.7 L623.4 488.1 L623.1 492.6 L622.8 497.0 L622.7 501.5 L622.6 505.9 L622.5 510.4 L622.5 514.8 L624.5 514.9 L624.6 510.5 L624.6 506.2 L624.7 501.8 L624.9 497.4 L625.1 493.1 L625.4 488.7 L625.7 484.3 L626.2 479.9 L626.8 475.6 L627.5 471.2 L628.6 466.9 L629.9 462.7 L631.3 458.4 L632.8 454.2 L634.4 450.0 L636.1 445.9 L638.0 441.8 L640.0 437.7 L642.1 433.7 L644.3 429.7 L646.7 425.8 Z" fill="#3c3c3c"/>
<path d="M637.9 447.1 L636.3 451.2 L634.7 455.4 L633.3 459.5 L632.0 463.7 L630.8 467.9 L629.8 472.2 L629.0 476.4 L628.5 480.7 L628.1 485.0 L627.7 489.3 L627.5 493.6 L632.4 494.7 L632.6 490.6 L632.9 486.5 L633.3 482.3 L633.8 478.2 L634.4 474.1 L635.3 470.0 L636.4 465.9 L637.5 461.8 L638.8 457.8 L640.2 453.7 L641.7 449.7 Z" fill="#a2a2a2"/>
<path d="M639.6 458.2 L638.4 462.3 L637.3 466.4 L636.2 470.4 L635.3 474.5 L634.7 478.6 L634.2 482.7 L633.9 486.7 L633.6 490.8 L633.3 494.9 L633.2 499.0 L633.0 503.1 L635.0 503.3 L635.1 499.3 L635.3 495.3 L635.5 491.3 L635.8 487.3 L636.1 483.3 L636.6 479.3 L637.2 475.2 L638.1 471.2 L639.0 467.2 L640.1 463.2 L641.3 459.2 Z" fill="#6a6a6a"/>
<path d="M730.8 391.5 L726.1 391.6 L721.4 391.8 L716.7 391.9 L712.0 392.2 L707.4 392.5 L702.8 392.8 L698.2 393.2 L693.7 393.6 L689.2 394.1 L684.8 395.1 L680.5 396.5 L676.3 398.3 L672.3 400.4 L668.5 402.9 L665.0 405.8 L661.9 409.2 L659.2 413.1 L656.8 417.2 L654.9 421.6 L653.2 426.1 L651.7 430.6 L650.4 435.1 L649.1 439.6 L647.9 443.9 L646.5 448.0 L645.1 452.0 L643.7 455.9 L642.5 459.9 L641.4 463.9 L640.3 467.9 L644.3 469.8 L645.2 466.0 L646.1 462.1 L647.2 458.2 L648.5 454.3 L649.8 450.4 L651.1 446.4 L652.4 442.3 L653.7 438.2 L655.2 434.0 L656.8 429.8 L658.6 425.6 L660.6 421.6 L662.9 417.7 L665.5 414.1 L668.5 410.9 L671.8 407.9 L675.3 405.4 L679.1 403.2 L682.9 401.2 L686.9 399.6 L691.1 398.4 L695.4 397.7 L699.7 397.2 L704.1 396.6 L708.5 396.2 L712.9 395.8 L717.5 395.4 L722.0 395.2 L726.6 395.0 L731.2 394.8 Z" fill="#1c1c1c"/>
<path d="M731.2 394.8 L726.6 395.0 L722.0 395.2 L717.5 395.4 L712.9 395.8 L708.5 396.2 L704.1 396.6 L699.7 397.2 L695.4 397.7 L691.1 398.4 L686.9 399.6 L682.9 401.2 L679.1 403.2 L675.3 405.4 L671.8 407.9 L668.5 410.9 L665.5 414.1 L662.9 417.7 L660.6 421.6 L658.6 425.6 L656.8 429.8 L655.2 434.0 L653.7 438.2 L652.4 442.3 L651.1 446.4 L649.8 450.4 L648.5 454.3 L647.2 458.2 L646.1 462.1 L645.2 466.0 L644.3 469.8 L646.0 470.7 L646.9 466.9 L647.8 463.0 L648.8 459.1 L650.0 455.3 L651.2 451.4 L652.6 447.5 L653.9 443.6 L655.4 439.6 L657.0 435.7 L658.7 431.7 L660.6 427.8 L662.7 424.0 L665.1 420.4 L667.7 417.0 L670.6 413.8 L673.7 410.9 L677.1 408.4 L680.7 406.0 L684.4 404.0 L688.2 402.3 L692.2 401.0 L696.4 400.2 L700.6 399.5 L704.8 398.9 L709.1 398.3 L713.5 397.9 L717.9 397.5 L722.4 397.2 L726.9 397.0 L731.4 396.8 Z" fill="#6a6a6a"/>
<path d="M731.4 396.8 L726.9 397.0 L722.4 397.2 L717.9 397.5 L713.5 397.9 L709.1 398.3 L704.8 398.9 L700.6 399.5 L696.4 400.2 L692.2 401.0 L688.2 402.3 L684.4 404.0 L680.7 406.0 L677.1 408.4 L673.7 410.9 L670.6 413.8 L667.7 417.0 L665.1 420.4 L662.7 424.0 L660.6 427.8 L658.7 431.7 L657.0 435.7 L655.4 439.6 L653.9 443.6 L652.6 447.5 L651.2 451.4 L655.9 454.9 L657.2 451.2 L658.7 447.6 L660.3 444.1 L662.2 440.6 L664.1 437.2 L666.2 433.9 L668.4 430.7 L670.8 427.5 L673.3 424.5 L676.0 421.5 L678.8 418.7 L681.8 416.0 L684.9 413.5 L688.1 411.1 L691.5 409.1 L695.2 407.6 L698.9 406.5 L702.8 405.6 L706.8 404.8 L710.8 404.0 L714.9 403.4 L719.1 402.8 L723.3 402.4 L727.6 402.1 L731.9 401.8 Z" fill="#d4d4d4"/>
<path d="M731.9 401.8 L727.6 402.1 L723.3 402.4 L719.1 402.8 L714.9 403.4 L710.8 404.0 L706.8 404.8 L702.8 405.6 L698.9 406.5 L695.2 407.6 L691.5 409.1 L688.1 411.1 L684.9 413.5 L681.8 416.0 L678.8 418.7 L676.0 421.5 L673.3 424.5 L670.8 427.5 L678.1 436.6 L680.2 433.6 L682.4 430.6 L684.7 427.7 L687.1 424.8 L689.7 422.0 L692.4 419.4 L695.4 417.1 L698.6 415.2 L701.9 413.9 L705.4 412.7 L709.0 411.5 L712.7 410.6 L716.5 409.7 L720.5 409.0 L724.4 408.4 L728.5 408.0 L732.6 407.7 Z" fill="#8e8e8e"/>
<path d="M646.6 448.0 L645.1 452.0 L643.7 455.9 L642.5 459.9 L641.4 463.9 L640.3 467.9 L639.4 471.9 L638.6 475.8 L638.0 479.8 L637.6 483.8 L637.2 487.8 L637.0 491.7 L636.8 495.7 L636.6 499.6 L636.5 503.6 L636.4 507.5 L636.3 511.5 L636.3 515.4 L636.3 519.3 L636.3 523.3 L636.4 527.2 L636.5 531.2 L636.7 535.1 L636.9 539.1 L637.2 543.0 L637.5 547.0 L638.0 550.9 L638.6 554.8 L639.4 558.8 L640.3 562.7 L641.3 566.6 L642.4 570.4 L643.7 574.3 L645.1 578.2 L646.6 582.0 L648.2 585.8 L649.9 589.6 L651.7 593.4 L653.7 597.2 L655.8 600.9 L658.0 604.6 L660.4 608.2 L662.9 611.8 L665.6 615.2 L668.5 618.6 L671.4 621.9 L674.5 625.2 L675.9 623.0 L673.0 619.6 L670.3 616.2 L667.6 612.8 L665.0 609.4 L662.6 605.9 L660.4 602.3 L658.3 598.6 L656.5 594.8 L654.7 591.1 L653.0 587.3 L651.5 583.6 L650.0 579.8 L648.7 576.1 L647.4 572.3 L646.3 568.5 L645.3 564.8 L644.3 561.0 L643.5 557.2 L642.9 553.5 L642.3 549.7 L641.8 545.9 L641.5 542.1 L641.3 538.3 L641.1 534.5 L640.9 530.7 L640.9 526.9 L640.8 523.2 L640.8 519.4 L640.8 515.6 L640.8 511.8 L640.8 508.0 L640.9 504.2 L641.0 500.5 L641.2 496.7 L641.3 492.9 L641.6 489.1 L641.9 485.2 L642.3 481.4 L642.8 477.6 L643.5 473.7 L644.3 469.8 L645.2 466.0 L646.1 462.1 L647.2 458.2 L648.5 454.3 L649.8 450.4 Z" fill="#141414"/>
<path d="M649.8 450.4 L648.5 454.3 L647.2 458.2 L646.1 462.1 L645.2 466.0 L644.3 469.8 L643.5 473.7 L642.8 477.6 L642.3 481.4 L641.9 485.2 L641.6 489.1 L641.3 492.9 L641.2 496.7 L641.0 500.5 L640.9 504.2 L640.8 508.0 L640.8 511.8 L640.8 515.6 L640.8 519.4 L640.8 523.2 L640.9 526.9 L640.9 530.7 L641.1 534.5 L641.3 538.3 L641.5 542.1 L641.8 545.9 L642.3 549.7 L642.9 553.5 L643.5 557.2 L644.3 561.0 L645.3 564.8 L646.3 568.5 L647.4 572.3 L648.7 576.1 L650.0 579.8 L651.5 583.6 L653.0 587.3 L654.7 591.1 L656.5 594.8 L658.3 598.6 L660.4 602.3 L662.6 605.9 L665.0 609.4 L667.6 612.8 L670.3 616.2 L673.0 619.6 L675.9 623.0 L679.1 626.1 L682.4 628.9 L683.0 627.9 L679.7 625.1 L676.6 622.0 L673.8 618.6 L671.1 615.2 L668.5 611.8 L666.0 608.4 L663.6 604.9 L661.5 601.2 L659.5 597.5 L657.7 593.8 L656.0 590.1 L654.4 586.3 L652.9 582.6 L651.6 578.8 L650.3 575.1 L649.1 571.4 L648.0 567.7 L647.0 564.0 L646.2 560.3 L645.4 556.6 L644.7 552.8 L644.2 549.1 L643.8 545.4 L643.5 541.7 L643.2 538.0 L643.0 534.2 L642.9 530.5 L642.8 526.8 L642.8 523.1 L642.7 519.4 L642.7 515.7 L642.7 512.0 L642.8 508.3 L642.9 504.5 L643.0 500.8 L643.1 497.1 L643.3 493.4 L643.5 489.6 L643.8 485.9 L644.2 482.1 L644.6 478.3 L645.3 474.5 L646.0 470.7 L646.9 466.9 L647.8 463.0 L648.8 459.1 L650.0 455.3 L651.3 451.5 Z" fill="#8c8c8c"/>
<path d="M655.9 440.1 L654.2 443.9 L652.7 447.6 L651.3 451.5 L650.0 455.3 L648.8 459.1 L647.8 463.0 L646.9 466.9 L646.0 470.7 L645.3 474.5 L644.6 478.3 L644.2 482.1 L643.8 485.9 L643.5 489.6 L643.3 493.4 L643.1 497.1 L643.0 500.8 L642.9 504.5 L642.8 508.3 L642.7 512.0 L642.7 515.7 L642.7 519.4 L642.8 523.1 L642.8 526.8 L642.9 530.5 L643.0 534.2 L643.2 538.0 L643.5 541.7 L643.8 545.4 L644.2 549.1 L644.7 552.8 L645.4 556.6 L646.2 560.3 L647.0 564.0 L648.0 567.7 L649.1 571.4 L650.3 575.1 L651.6 578.8 L652.9 582.6 L654.4 586.3 L656.0 590.1 L657.7 593.8 L659.5 597.5 L661.5 601.2 L663.6 604.9 L666.0 608.4 L668.5 611.8 L671.1 615.2 L672.5 613.4 L670.0 610.0 L667.6 606.6 L665.4 603.0 L663.3 599.4 L661.5 595.7 L659.8 592.0 L658.3 588.3 L656.8 584.5 L655.5 580.8 L654.2 577.2 L653.1 573.5 L652.0 569.9 L651.0 566.2 L650.1 562.6 L649.3 559.0 L648.6 555.4 L648.0 551.8 L647.5 548.1 L647.2 544.5 L646.9 540.9 L646.6 537.3 L646.5 533.8 L646.4 530.2 L646.3 526.6 L646.2 523.0 L646.2 519.4 L646.2 515.8 L646.2 512.2 L646.2 508.7 L646.3 505.1 L646.4 501.5 L646.5 497.9 L646.7 494.3 L646.9 490.6 L647.2 487.0 L647.5 483.4 L647.9 479.7 L648.5 476.0 L649.1 472.2 L649.8 468.5 L650.6 464.7 L651.5 460.9 L652.6 457.1 L653.8 453.3 L655.1 449.5 L656.5 445.8 L658.1 442.1 Z" fill="#1b1b1b"/>
<path d="M658.1 442.1 L656.5 445.8 L655.1 449.5 L653.8 453.3 L652.6 457.1 L651.5 460.9 L650.6 464.7 L649.8 468.5 L649.1 472.2 L648.5 476.0 L647.9 479.7 L647.5 483.4 L647.2 487.0 L646.9 490.6 L646.7 494.3 L646.5 497.9 L646.4 501.5 L646.3 505.1 L646.2 508.7 L646.2 512.2 L646.2 515.8 L646.2 519.4 L646.2 523.0 L646.3 526.6 L646.4 530.2 L646.5 533.8 L646.6 537.3 L646.9 540.9 L647.2 544.5 L647.5 548.1 L648.0 551.8 L648.6 555.4 L649.3 559.0 L650.1 562.6 L651.0 566.2 L652.0 569.9 L653.1 573.5 L654.2 577.2 L655.5 580.8 L656.8 584.5 L658.3 588.3 L659.8 592.0 L661.5 595.7 L663.3 599.4 L665.4 603.0 L667.6 606.6 L670.0 610.0 L672.5 613.4 L675.0 616.9 L677.8 620.2 L680.7 623.4 L683.9 626.3 L687.4 628.9 L691.0 631.3 L694.7 633.4 L694.9 632.9 L691.2 630.8 L687.6 628.4 L684.2 625.8 L681.0 622.9 L678.1 619.7 L675.4 616.3 L672.9 612.9 L670.4 609.4 L668.1 606.0 L665.9 602.5 L663.9 598.8 L662.1 595.2 L660.5 591.4 L659.0 587.7 L657.6 584.0 L656.3 580.3 L655.1 576.6 L654.0 573.0 L652.9 569.4 L652.0 565.8 L651.1 562.2 L650.3 558.6 L649.6 555.0 L649.1 551.4 L648.6 547.8 L648.2 544.3 L647.9 540.7 L647.7 537.2 L647.6 533.6 L647.4 530.1 L647.4 526.5 L647.3 523.0 L647.3 519.4 L647.3 515.9 L647.3 512.3 L647.3 508.8 L647.4 505.2 L647.5 501.7 L647.6 498.1 L647.8 494.5 L648.0 491.0 L648.2 487.4 L648.5 483.8 L648.9 480.1 L649.5 476.4 L650.1 472.7 L650.7 469.0 L651.5 465.2 L652.4 461.4 L653.4 457.6 L654.6 453.9 L655.8 450.1 L657.3 446.4 L658.8 442.7 Z" fill="#b0b0b0"/>
<path d="M660.5 439.1 L658.8 442.7 L657.3 446.4 L655.8 450.1 L654.6 453.9 L653.4 457.6 L652.4 461.4 L651.5 465.2 L650.7 469.0 L650.1 472.7 L649.5 476.4 L648.9 480.1 L648.5 483.8 L648.2 487.4 L648.0 491.0 L647.8 494.5 L647.6 498.1 L647.5 501.7 L647.4 505.2 L647.3 508.8 L647.3 512.3 L647.3 515.9 L647.3 519.4 L647.3 523.0 L647.4 526.5 L647.4 530.1 L647.6 533.6 L647.7 537.2 L647.9 540.7 L648.2 544.3 L648.6 547.8 L649.1 551.4 L649.6 555.0 L650.3 558.6 L651.1 562.2 L652.0 565.8 L652.9 569.4 L654.0 573.0 L655.1 576.6 L656.3 580.3 L657.6 584.0 L659.0 587.7 L660.5 591.4 L662.1 595.2 L663.9 598.8 L665.9 602.5 L668.1 606.0 L670.4 609.4 L671.3 608.4 L669.0 605.0 L666.9 601.5 L664.9 597.9 L663.2 594.2 L661.7 590.4 L660.2 586.7 L658.9 583.0 L657.7 579.3 L656.5 575.7 L655.5 572.1 L654.5 568.5 L653.6 565.0 L652.8 561.4 L652.0 557.9 L651.4 554.4 L650.9 550.8 L650.4 547.3 L650.0 543.8 L649.8 540.3 L649.6 536.8 L649.4 533.3 L649.3 529.9 L649.2 526.4 L649.2 522.9 L649.2 519.4 L649.2 515.9 L649.2 512.5 L649.2 509.0 L649.3 505.5 L649.4 502.0 L649.5 498.5 L649.6 495.0 L649.8 491.5 L650.0 488.0 L650.3 484.4 L650.7 480.8 L651.2 477.2 L651.7 473.6 L652.4 469.9 L653.1 466.1 L653.9 462.4 L654.8 458.6 L655.9 454.9 L657.2 451.2 L658.5 447.5 L660.0 443.8 L661.7 440.2 Z" fill="#303030"/>
<path d="M669.8 426.3 L667.5 429.6 L665.4 433.1 L663.5 436.6 L661.7 440.2 L660.0 443.8 L658.5 447.5 L657.2 451.2 L655.9 454.9 L654.8 458.6 L653.9 462.4 L653.1 466.1 L652.4 469.9 L651.7 473.6 L651.2 477.2 L650.7 480.8 L650.3 484.4 L650.0 488.0 L649.8 491.5 L649.6 495.0 L649.5 498.5 L649.4 502.0 L649.3 505.5 L649.2 509.0 L649.2 512.5 L649.2 515.9 L649.2 519.4 L649.2 522.9 L649.2 526.4 L649.3 529.9 L649.4 533.3 L649.6 536.8 L649.8 540.3 L650.0 543.8 L650.4 547.3 L650.9 550.8 L651.4 554.4 L652.0 557.9 L652.8 561.4 L653.6 565.0 L654.5 568.5 L655.5 572.1 L656.5 575.7 L657.7 579.3 L658.9 583.0 L660.2 586.7 L661.7 590.4 L663.2 594.2 L664.9 597.9 L666.9 601.5 L669.0 605.0 L671.3 608.4 L673.7 611.9 L676.1 615.4 L678.8 618.8 L681.6 622.0 L684.7 624.9 L688.1 627.5 L691.6 629.9 L695.3 632.1 L699.1 634.2 L703.0 636.1 L706.9 637.8 L711.0 639.5 L715.2 641.0 L719.4 642.5 L723.7 643.8 L728.0 644.9 L731.4 645.7 L731.6 644.5 L728.2 643.6 L723.9 642.4 L719.7 641.1 L715.5 639.6 L711.5 637.9 L707.5 636.2 L703.6 634.4 L699.8 632.5 L696.1 630.4 L692.5 628.1 L689.1 625.7 L685.8 623.0 L682.8 620.1 L680.1 616.8 L677.6 613.3 L675.2 609.8 L673.0 606.4 L670.8 602.9 L668.9 599.4 L667.1 595.8 L665.5 592.1 L664.1 588.4 L662.9 584.7 L661.7 581.0 L660.6 577.4 L659.6 573.8 L658.7 570.2 L657.8 566.7 L657.0 563.3 L656.3 559.8 L655.7 556.4 L655.1 553.0 L654.6 549.6 L654.2 546.2 L653.9 542.9 L653.7 539.5 L653.5 536.1 L653.3 532.8 L653.2 529.5 L653.2 526.1 L653.1 522.8 L653.1 519.4 L653.1 516.1 L653.1 512.8 L653.2 509.4 L653.2 506.1 L653.3 502.8 L653.4 499.4 L653.5 496.0 L653.7 492.7 L653.9 489.3 L654.1 485.8 L654.4 482.4 L654.8 478.9 L655.2 475.3 L655.7 471.7 L656.3 468.0 L657.0 464.3 L657.8 460.7 L658.8 457.0 L659.9 453.3 L661.2 449.7 L662.5 446.0 L664.1 442.5 L665.8 438.9 L667.6 435.5 L669.6 432.1 L671.7 428.7 Z" fill="#f7f7f7"/>
<path d="M671.7 428.7 L669.6 432.1 L667.6 435.5 L665.8 438.9 L664.1 442.5 L662.5 446.0 L661.2 449.7 L659.9 453.3 L658.8 457.0 L657.8 460.7 L657.0 464.3 L656.3 468.0 L655.7 471.7 L655.2 475.3 L654.8 478.9 L654.4 482.4 L654.1 485.8 L653.9 489.3 L653.7 492.7 L653.5 496.0 L653.4 499.4 L653.3 502.8 L653.2 506.1 L653.2 509.4 L653.1 512.8 L653.1 516.1 L653.1 519.4 L653.1 522.8 L653.2 526.1 L653.2 529.5 L653.3 532.8 L653.5 536.1 L653.7 539.5 L653.9 542.9 L654.2 546.2 L654.6 549.6 L655.1 553.0 L655.7 556.4 L656.3 559.8 L657.0 563.3 L657.8 566.7 L658.7 570.2 L659.6 573.8 L660.6 577.4 L661.7 581.0 L662.9 584.7 L664.1 588.4 L665.5 592.1 L667.1 595.8 L668.9 599.4 L670.8 602.9 L673.0 606.4 L675.2 609.8 L677.6 613.3 L680.1 616.8 L682.8 620.1 L685.8 623.0 L687.3 620.4 L684.5 617.4 L681.9 614.1 L679.6 610.6 L677.4 607.0 L675.4 603.5 L673.4 600.0 L671.6 596.5 L670.0 592.9 L668.7 589.2 L667.5 585.5 L666.4 581.8 L665.5 578.2 L664.6 574.6 L663.8 571.1 L663.1 567.7 L662.4 564.3 L661.8 560.9 L661.2 557.6 L660.6 554.4 L660.2 551.1 L659.8 547.9 L659.5 544.7 L659.2 541.5 L659.0 538.4 L658.8 535.2 L658.7 532.0 L658.7 528.9 L658.6 525.8 L658.6 522.6 L658.6 519.5 L658.6 516.3 L658.6 513.2 L658.6 510.1 L658.6 506.9 L658.7 503.8 L658.8 500.6 L658.9 497.4 L659.0 494.3 L659.1 491.0 L659.3 487.8 L659.5 484.5 L659.8 481.1 L660.1 477.7 L660.4 474.2 L660.8 470.7 L661.3 467.1 L662.0 463.5 L662.8 459.9 L663.7 456.3 L664.8 452.7 L666.0 449.2 L667.4 445.6 L668.9 442.2 L670.6 438.7 L672.4 435.4 L674.4 432.1 Z" fill="#cdcdcd"/>
<path d="M666.0 449.2 L664.8 452.7 L663.7 456.3 L662.8 459.9 L662.0 463.5 L661.3 467.1 L660.8 470.7 L660.4 474.2 L660.1 477.7 L659.8 481.1 L659.5 484.5 L659.3 487.8 L659.1 491.0 L659.0 494.3 L658.9 497.4 L658.8 500.6 L658.7 503.8 L658.6 506.9 L658.6 510.1 L658.6 513.2 L658.6 516.3 L658.6 519.5 L658.6 522.6 L658.6 525.8 L664.3 525.4 L664.3 522.4 L664.3 519.5 L664.3 516.6 L664.3 513.7 L664.3 510.7 L664.3 507.8 L664.4 504.8 L664.4 501.9 L664.5 498.9 L664.6 495.9 L664.7 492.9 L664.8 489.9 L664.9 486.7 L665.0 483.5 L665.1 480.2 L665.3 476.9 L665.5 473.4 L665.9 469.9 L666.3 466.4 L667.0 462.9 L667.7 459.4 L668.6 455.9 L669.7 452.4 Z" fill="#3a3a3a"/>
<path d="M674.4 432.1 L672.4 435.4 L670.6 438.7 L668.9 442.2 L667.4 445.6 L666.0 449.2 L669.7 452.4 L670.9 449.0 L672.2 445.6 L673.7 442.2 L675.4 438.9 L677.3 435.6 Z" fill="#8a8a8a"/>
<path d="M658.6 525.8 L658.7 528.9 L658.7 532.0 L658.8 535.2 L659.0 538.4 L659.2 541.5 L659.5 544.7 L659.8 547.9 L660.2 551.1 L660.6 554.4 L661.2 557.6 L661.8 560.9 L662.4 564.3 L663.1 567.7 L663.8 571.1 L664.6 574.6 L665.5 578.2 L666.4 581.8 L667.5 585.5 L668.7 589.2 L670.0 592.9 L671.6 596.5 L673.4 600.0 L675.4 603.5 L677.4 607.0 L679.6 610.6 L681.9 614.1 L684.5 617.4 L687.3 620.4 L688.9 617.7 L686.2 614.6 L683.8 611.2 L681.7 607.6 L679.8 604.0 L677.9 600.5 L676.1 597.0 L674.5 593.5 L673.1 589.9 L672.0 586.2 L671.0 582.5 L670.2 578.8 L669.5 575.2 L668.9 571.7 L668.3 568.3 L667.7 565.0 L667.2 561.7 L666.7 558.5 L666.3 555.3 L665.9 552.2 L665.6 549.2 L665.3 546.1 L665.0 543.1 L664.8 540.1 L664.6 537.2 L664.5 534.2 L664.4 531.2 L664.4 528.3 L664.3 525.4 Z" fill="#c2c0be"/>
<path d="M613.4 548.1 L613.9 552.9 L614.6 557.7 L615.6 562.4 L616.7 567.1 L618.1 571.7 L619.6 576.3 L621.4 580.8 L623.3 585.2 L625.5 589.6 L627.8 593.8 L630.3 598.0 L632.9 602.0 L635.7 606.0 L638.7 609.9 L641.7 613.7 L644.8 617.4 L648.1 621.0 L651.6 617.4 L648.6 613.7 L645.7 610.0 L643.0 606.2 L640.3 602.4 L637.8 598.5 L635.4 594.5 L633.1 590.4 L631.1 586.3 L629.1 582.1 L627.4 577.8 L625.8 573.5 L624.4 569.1 L623.2 564.7 L622.2 560.2 L621.3 555.7 L620.6 551.2 L620.2 546.6 Z" fill="#8c8c8c"/>
<path d="M613.6 538.3 L613.9 543.1 L614.3 547.9 L614.8 552.6 L615.6 557.4 L616.5 562.1 L617.6 566.7 L619.0 571.3 L620.5 575.9 L622.2 580.4 L624.1 584.8 L626.3 589.1 L628.5 593.3 L631.0 597.5 L633.6 601.5 L636.4 605.5 L637.9 604.2 L635.3 600.3 L632.8 596.3 L630.4 592.2 L628.2 588.0 L626.1 583.7 L624.3 579.4 L622.6 574.9 L621.2 570.5 L619.9 565.9 L618.8 561.3 L617.8 556.7 L617.2 552.1 L616.7 547.4 L616.3 542.7 L616.0 538.0 Z" fill="#1e1e1e"/>
<path d="M620.2 546.6 L620.6 551.2 L621.3 555.7 L622.2 560.2 L623.2 564.7 L624.4 569.1 L625.8 573.5 L627.4 577.8 L629.1 582.1 L631.1 586.3 L633.1 590.4 L635.4 594.5 L637.8 598.5 L640.3 602.4 L643.0 606.2 L645.7 610.0 L648.6 613.7 L651.6 617.4 L654.8 620.9 L658.1 624.2 L661.5 627.5 L665.0 630.7 L668.7 633.8 L669.7 632.3 L666.1 629.2 L662.7 626.0 L659.4 622.7 L656.2 619.3 L653.1 615.8 L650.2 612.2 L647.4 608.5 L644.8 604.7 L642.3 600.9 L639.9 597.0 L637.6 593.0 L635.4 589.0 L633.5 584.9 L631.6 580.8 L630.0 576.6 L628.5 572.3 L627.1 568.0 L626.0 563.7 L625.0 559.3 L624.1 554.9 L623.5 550.5 L623.1 546.0 Z" fill="#9a9a9a"/>
<path d="M626.0 563.7 L627.1 568.0 L628.5 572.3 L630.0 576.6 L631.6 580.8 L633.5 584.9 L635.4 589.0 L637.6 593.0 L639.9 597.0 L642.3 600.9 L644.8 604.7 L647.4 608.5 L650.2 612.2 L653.1 615.8 L656.2 619.3 L659.4 622.7 L662.7 626.0 L666.1 629.2 L668.3 626.2 L665.1 622.9 L662.0 619.6 L659.0 616.2 L656.1 612.7 L653.4 609.1 L650.9 605.3 L648.5 601.6 L646.2 597.8 L644.0 593.9 L642.0 590.0 L640.0 586.1 L638.3 582.1 L636.6 578.1 L635.1 574.0 L633.8 569.9 L632.6 565.8 L631.5 561.6 Z" fill="#7a7a7a"/>
<path d="M632.5 575.3 L634.1 579.4 L635.9 583.5 L637.7 587.5 L639.8 591.5 L641.9 595.4 L644.2 599.3 L646.6 603.1 L649.2 606.9 L651.8 610.6 L654.6 614.2 L657.6 617.7 L660.7 621.1 L661.5 620.1 L658.5 616.7 L655.6 613.2 L652.9 609.6 L650.3 605.9 L647.9 602.1 L645.5 598.3 L643.3 594.4 L641.2 590.5 L639.3 586.6 L637.5 582.6 L635.8 578.5 L634.3 574.5 Z" fill="#2c2c2c"/>
<path d="M630.6 557.5 L631.5 561.6 L632.6 565.8 L633.8 569.9 L635.1 574.0 L636.6 578.1 L638.3 582.1 L640.0 586.1 L642.0 590.0 L644.0 593.9 L646.2 597.8 L648.5 601.6 L650.9 605.3 L653.4 609.1 L656.1 612.7 L659.0 616.2 L662.0 619.6 L665.1 622.9 L668.3 626.2 L671.6 629.4 L675.2 632.4 L678.9 635.0 L682.9 637.4 L684.3 634.6 L680.5 632.2 L677.0 629.5 L673.6 626.4 L670.5 623.2 L667.5 619.8 L664.6 616.5 L661.8 613.1 L659.1 609.5 L656.6 605.9 L654.3 602.2 L652.2 598.5 L650.1 594.7 L648.2 590.9 L646.4 587.0 L644.7 583.2 L643.1 579.3 L641.6 575.4 L640.3 571.5 L639.1 567.6 L638.0 563.6 L637.1 559.6 L636.3 555.6 Z" fill="#bdbdbd"/>
<path d="M636.3 555.6 L637.1 559.6 L638.0 563.6 L639.1 567.6 L640.3 571.5 L641.6 575.4 L643.1 579.3 L644.7 583.2 L646.4 587.0 L648.2 590.9 L650.1 594.7 L652.2 598.5 L654.3 602.2 L656.6 605.9 L659.1 609.5 L661.8 613.1 L664.6 616.5 L667.5 619.8 L671.9 614.2 L669.3 610.8 L666.9 607.3 L664.6 603.8 L662.5 600.2 L660.6 596.5 L658.9 592.8 L657.3 589.0 L655.8 585.3 L654.4 581.6 L653.1 577.9 L651.9 574.2 L650.8 570.5 L649.7 566.9 L648.8 563.2 L648.0 559.5 L647.2 555.9 L646.6 552.2 Z" fill="#111"/>
<path d="M653.7 546.4 L654.2 549.8 L654.6 553.2 L655.2 556.6 L655.9 560.0 L656.6 563.5 L657.4 567.0 L658.3 570.5 L659.2 574.0 L660.3 577.6 L661.3 581.2 L662.5 584.9 L663.8 588.6 L665.2 592.3 L666.8 596.0 L668.6 599.6 L670.6 603.2 L672.8 606.6 L675.0 610.1 L677.4 613.6 L679.9 617.0 L681.2 615.1 L678.9 611.6 L676.6 608.0 L674.5 604.5 L672.5 601.1 L670.6 597.6 L669.0 594.0 L667.5 590.3 L666.3 586.5 L665.1 582.8 L664.1 579.2 L663.2 575.6 L662.3 572.1 L661.5 568.6 L660.7 565.2 L660.0 561.8 L659.4 558.4 L658.8 555.1 L658.3 551.8 L657.9 548.5 L657.6 545.3 Z" fill="#777"/>
<path d="M658.0 538.6 L658.2 541.8 L658.5 545.0 L658.9 548.2 L659.3 551.5 L659.7 554.7 L660.3 558.0 L660.9 561.4 L661.6 564.7 L662.3 568.1 L663.1 571.6 L663.9 575.1 L664.8 578.7 L665.8 582.3 L666.9 586.0 L668.1 589.7 L669.5 593.4 L671.1 597.0 L672.9 600.6 L674.9 604.0 L675.8 603.0 L673.9 599.5 L672.1 596.0 L670.6 592.4 L669.2 588.7 L668.1 585.0 L667.1 581.3 L666.2 577.7 L665.4 574.1 L664.6 570.6 L663.9 567.2 L663.2 563.8 L662.6 560.5 L662.0 557.2 L661.6 554.0 L661.1 550.8 L660.7 547.6 L660.4 544.4 L660.2 541.3 L660.0 538.1 Z" fill="#2b2b2b"/>
<path d="M667.3 635.8 L671.3 638.6 L675.4 641.1 L679.7 643.4 L684.1 645.4 L688.6 647.2 L693.2 648.9 L697.8 650.3 L702.5 651.6 L707.2 652.8 L712.0 653.8 L716.8 654.7 L721.6 655.4 L726.5 656.1 L730.3 656.5 L730.3 655.9 L726.6 655.4 L721.8 654.8 L717.0 654.0 L712.2 653.1 L707.4 652.0 L702.8 650.8 L698.1 649.5 L693.5 648.0 L689.0 646.4 L684.5 644.5 L680.2 642.4 L676.0 640.2 L671.9 637.7 L668.0 634.8 Z" fill="#b4b4b4"/>
<path d="M679.2 634.5 L683.1 636.9 L687.2 639.1 L691.3 641.1 L695.6 642.9 L699.9 644.6 L704.3 646.0 L708.8 647.4 L713.3 648.6 L717.8 649.7 L722.5 650.7 L727.1 651.6 L730.7 652.1 L730.8 651.2 L727.2 650.6 L722.6 649.7 L718.1 648.7 L713.6 647.5 L709.1 646.2 L704.7 644.8 L700.3 643.3 L696.1 641.6 L691.9 639.8 L687.8 637.8 L683.8 635.6 L680.0 633.1 Z" fill="#a8a8a8"/>
<path d="M676.6 622.0 L679.7 625.1 L683.0 627.9 L686.5 630.5 L690.2 632.8 L694.0 635.0 L698.0 636.9 L702.0 638.8 L706.1 640.4 L710.3 642.0 L714.6 643.4 L718.9 644.8 L723.3 646.0 L727.7 647.0 L731.2 647.8 L731.3 646.8 L727.9 646.1 L723.4 645.0 L719.1 643.7 L714.8 642.3 L710.6 640.8 L706.5 639.2 L702.4 637.5 L698.5 635.7 L694.6 633.6 L690.9 631.5 L687.2 629.1 L683.8 626.5 L680.6 623.7 L677.6 620.5 Z" fill="#bcbcbc"/>
<path d="M680.6 616.0 L683.3 619.3 L686.2 622.3 L689.4 625.0 L692.8 627.4 L696.4 629.7 L700.0 631.8 L703.8 633.8 L707.7 635.6 L711.6 637.4 L715.7 639.0 L719.8 640.6 L724.0 641.9 L728.3 643.1 L731.6 644.0 L731.7 643.1 L728.4 642.2 L724.1 640.9 L720.0 639.5 L715.9 637.9 L711.9 636.2 L708.0 634.4 L704.2 632.6 L700.5 630.6 L697.0 628.4 L693.5 626.1 L690.2 623.6 L687.0 620.9 L684.2 617.9 L681.6 614.6 Z" fill="#c4c4c4"/>
</g>
<path d="M732.5 406.7 L728.4 407.0 L724.3 407.4 L720.2 408.0 L716.3 408.7 L712.4 409.5 L708.6 410.4 L705.0 411.5 L701.4 412.7 L698.0 414.0 L694.7 415.8 L691.7 418.0 L688.9 420.6 L686.3 423.3 L683.7 426.2 L681.3 429.2 L679.1 432.2 L677.1 435.4 L675.3 438.7 L673.6 442.0 L672.1 445.4 L670.7 448.8 L669.5 452.3 L668.4 455.7 L667.5 459.3 L666.7 462.8 L666.1 466.3 L665.6 469.8 L665.3 473.3 L665.0 476.7 L664.9 480.1 L664.7 483.4 L664.6 486.6 L664.5 489.8 L664.4 492.8 L664.3 495.8 L664.2 498.8 L664.1 501.8 L664.1 504.8 L664.0 507.7 L664.0 510.7 L664.0 513.6 L664.0 516.6 L664.0 519.5 L664.0 522.5 L664.0 525.4 L664.1 528.3 L664.1 531.3 L664.2 534.2 L664.3 537.2 L664.5 540.2 L664.7 543.2 L665.0 546.2 L665.3 549.3 L665.6 552.3 L666.0 555.5 L666.5 558.6 L667.0 561.8 L667.5 565.1 L668.1 568.5 L668.7 571.9 L669.3 575.4 L670.0 579.0 L670.9 582.7 L671.8 586.4 L673.0 590.0 L674.4 593.7 L676.0 597.2 L677.8 600.7 L679.6 604.2 L681.6 607.8 L683.7 611.4 L686.1 614.7 L688.8 617.8 L691.7 620.6 L694.9 623.2 L698.2 625.5 L701.7 627.8 L705.2 629.9 L708.9 631.8 L712.7 633.7 L716.5 635.5 L720.5 637.2 L724.5 638.7 L728.7 640.1 L731.9 641.1 L730 520 Z" fill="#dcd9d6" filter="url(#bl1)"/>
<path d="M702.5 415.4 L699.2 416.8 L696.1 418.7 L693.3 421.1 L690.7 423.8 L688.2 426.6 L685.9 429.5 L683.7 432.5 L681.7 435.6 L679.8 438.8 L678.1 442.0 L676.6 445.3 L675.2 448.6 L674.0 452.0 L672.9 455.4 L672.0 458.8 L671.3 462.2 L670.7 465.7 L670.2 469.1 L669.9 472.5 L669.8 475.9 L669.7 479.2 L669.7 482.5 L669.7 485.7 L669.7 488.8 L669.7 491.7 L669.7 494.6 L669.6 497.4 L669.6 500.2 L669.5 503.0 L669.5 505.8 L669.5 508.6 L669.4 511.3 L669.4 514.1 L669.4 516.8 L669.4 519.5 L669.4 522.3 L669.5 525.0 L669.5 527.8 L669.5 530.5 L669.6 533.3 L669.7 536.1 L669.8 538.9 L670.0 541.7 L670.2 544.5 L670.4 547.4 L670.6 550.3 L670.9 553.3 L671.2 556.3 L671.5 559.4 L671.9 562.5 L672.3 565.8 L672.7 569.1 L673.1 572.6 L673.6 576.2 L674.2 579.8 L675.0 583.5 L675.9 587.2 L677.1 590.8 L678.5 594.3 L680.1 597.8 L681.8 601.4 L683.6 605.0 L685.5 608.6 L687.8 612.1 L690.3 615.2 L693.1 618.1 L696.1 620.7 L699.3 623.1 L702.6 625.4 L706.0 627.6 L709.6 629.6 L713.3 631.6" fill="none" stroke="#b9b6b3" stroke-width="5" filter="url(#bl2)" opacity=".8"/>
<ellipse cx="790" cy="515" rx="112" ry="128" fill="#e6e4e2" filter="url(#bl2)"/>
<ellipse cx="790" cy="515" rx="100" ry="120" fill="#f5f5f4" filter="url(#bl2)"/>
<ellipse cx="790" cy="515" rx="88" ry="108" fill="none" stroke="#e6e4e2" stroke-width="1.5" filter="url(#bl2)"/>
<g filter="url(#bl1)">
<path d="M650 629 C656 640 668 646 680 648 L720 657 V719 H670 L661 692 L655 660 Z" fill="#d4d4d4"/>
<path d="M651 631 C652 650 658 682 670 702" fill="none" stroke="#2a2a2a" stroke-width="2.6"/>
<path d="M655 638 C657 658 664 684 678 702" fill="none" stroke="#f6f6f6" stroke-width="3"/>
<path d="M659 642 C661 660 669 684 684 700" fill="none" stroke="#555" stroke-width="2.6"/>
<path d="M663 644 C665 662 674 684 690 700" fill="none" stroke="#eee" stroke-width="2.4"/>
<path d="M667 645 C669 662 678 684 696 700" fill="none" stroke="#666" stroke-width="2.2"/>
<path d="M673 643 C690 646 706 650 720 655 V703 C704 701 690 692 682 680 C675 668 673 656 673 643 Z" fill="url(#bowl)"/>
<path d="M672 644 C673 662 680 684 702 702" fill="none" stroke="#ececec" stroke-width="1.8"/>
<path d="M682 690 C694 700 708 703 720 703" fill="none" stroke="#f2f2f2" stroke-width="2.5"/>
<path d="M663 694 L688 698 L693 706 L668 705 Z" fill="#141414"/>
<path d="M668 706 L720 708 V718 H672 Z" fill="#ececec"/>
<path d="M670 712 L720 713" stroke="#b8b8b8" stroke-width="1.5"/>
</g>
</g>
</g>
<path d="M720 213 H605.5 V717 H720" fill="none" stroke="#dfe8f8" stroke-width="1" opacity=".8"/>
<path d="M720 212.2 H604.7 V717.8 H720" fill="none" stroke="#2b3c60" stroke-width="1"/>
<rect x="601.6999999999999" y="209.3" width="6.4" height="6.4" fill="#dfe5f2" stroke="#8fa6d0" stroke-width="0.6"/>
<rect x="601.6999999999999" y="461.8" width="6.4" height="6.4" fill="#dfe5f2" stroke="#8fa6d0" stroke-width="0.6"/>
<rect x="601.6999999999999" y="714.3" width="6.4" height="6.4" fill="#dfe5f2" stroke="#8fa6d0" stroke-width="0.6"/></svg>
<div class="abs" id="leftstrip"></div>
<div class="abs" id="menu">
<div class="mi" style="top:1.5px"><span class="l">New...</span><span class="s">Ctrl+N</span></div>
<div class="mi" style="top:17.5px"><span class="l">Open...</span><span class="s">Ctrl+O</span></div>
<div class="mi" style="top:33.5px"><span class="l">Browse in Bridge...</span><span class="s">Alt+Ctrl+O</span></div>
<div class="mi" style="top:49.0px"><span class="l">Open As...</span><span class="s">Alt+Shift+Ctrl+O</span></div>
<div class="mi" style="top:64.5px"><span class="l">Open as Smart Object...</span></div>
<div class="mi" style="top:80.5px"><span class="l">Open Recent</span><span class="ar"></span></div>
<div class="mi" style="top:105.5px"><span class="l">Close</span><span class="s">Ctrl+W</span></div>
<div class="mi" style="top:121.0px"><span class="l">Close All</span><span class="s">Alt+Ctrl+W</span></div>
<div class="mi" style="top:136.5px"><span class="l">Close Others</span><span class="s">Alt+Ctrl+P</span></div>
<div class="mi" style="top:152.5px"><span class="l">Close and Go to Bridge...</span><span class="s">Shift+Ctrl+W</span></div>
<div class="mi" style="top:168.5px"><span class="l">Save</span><span class="s">Ctrl+S</span></div>
<div class="mi" style="top:184.5px"><span class="l">Save As...</span><span class="s">Shift+Ctrl+S</span></div>
<div class="mi" style="top:200.5px"><span class="l">Revert</span><span class="s">F12</span></div>
<div class="mi" style="top:225.5px"><span class="l">Export</span><span class="ar"></span></div>
<div class="mi" style="top:241.5px"><span class="l">Generate</span><span class="ar"></span></div>
<div class="mi" style="top:256.5px"><span class="l">Share...</span></div>
<div class="mi" style="top:272.5px"><span class="l">Share on Behance...</span></div>
<div class="mi" style="top:297.5px"><span class="l">Search Adobe Stock...</span></div>
<div class="mi" style="top:313.5px"><span class="l">Place Embedded...</span></div>
<div class="mi" style="top:328.5px"><span class="l">Place Linked...</span></div>
<div class="mi dis" style="top:344.5px"><span class="l">Package...</span></div>
<div class="mi" style="top:370.5px"><span class="l">Automate</span><span class="ar"></span></div>
<div class="mi" style="top:386.0px"><span class="l">Scripts</span><span class="ar"></span></div>
<div class="mi" style="top:401.5px"><span class="l">Import</span><span class="ar"></span></div>
<div class="mi" style="top:426.0px"><span class="l">File Info...</span><span class="s">Alt+Shift+Ctrl+I</span></div>
<div class="mi" style="top:450.5px"><span class="l">Print...</span><span class="s">Ctrl+P</span></div>
<div class="mi" style="top:466.5px"><span class="l">Print One Copy</span><span class="s">Alt+Shift+Ctrl+P</span></div>
<div class="mi" style="top:491.5px"><span class="l">Exit</span><span class="s">Ctrl+Q</span></div>
<div class="sep" style="top:99px"></div>
<div class="sep" style="top:219px"></div>
<div class="sep" style="top:291px"></div>
<div class="sep" style="top:362px"></div>
<div class="sep" style="top:421px"></div>
<div class="sep" style="top:446px"></div>
<div class="sep" style="top:485px"></div>
<div class="bsep" style="top:168px"></div>
</div>
<svg class="abs" style="left:58px;top:199px" width="14" height="20" viewBox="0 0 14 20"><path d="M2 1.5 V14 L5 11.3 L7.2 16 L9 15.2 L6.9 10.7 H10.8 Z" fill="#f4f4f4" stroke="#555" stroke-width="0.9"/></svg>
</div>
</body></html>
